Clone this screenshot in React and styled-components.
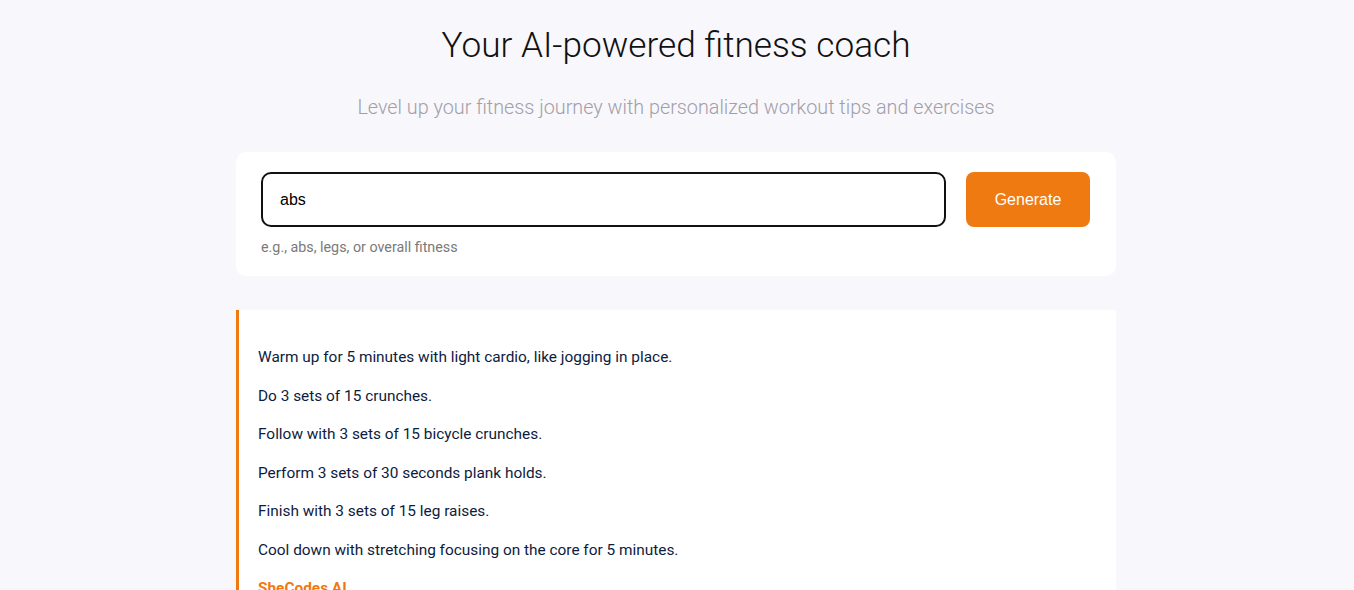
import React, { useState } from "react";
import styled, { createGlobalStyle } from "styled-components";

const GlobalStyle = createGlobalStyle`
  body {
    margin: 0;
    background: #f8f7fc;
    font-family: Roboto, "Liberation Sans", sans-serif;
  }
`;

const Page = styled.main`
  width: 880px;
  margin: 0 auto;
  padding: 22px 2px 0 0;
`;

const Title = styled.h1`
  margin: 0;
  text-align: center;
  font-weight: 300;
  font-size: 35.2px;
  line-height: 46px;
  color: #111;
`;

const Subtitle = styled.p`
  margin: 27px 0 0;
  text-align: center;
  font-weight: 300;
  font-size: 19.8px;
  line-height: 26px;
  color: #a19ea8;
`;

const FormCard = styled.form`
  margin-top: 31px;
  background: #fff;
  border-radius: 10px;
  padding: 20px 26px 20px 25px;
`;

const Row = styled.div`
  display: flex;
  gap: 20px;
`;

const Input = styled.input`
  flex: 1;
  height: 55px;
  box-sizing: border-box;
  border: 2px solid #111;
  border-radius: 10px;
  padding: 0 17px;
  font-family: "Liberation Sans", Arial, sans-serif;
  font-size: 16px;
  color: #000;
  outline: none;
`;

const Button = styled.button`
  width: 124px;
  height: 55px;
  border: none;
  border-radius: 8px;
  background: #f07a12;
  color: #fff;
  font-family: "Liberation Sans", Arial, sans-serif;
  font-size: 16px;
  cursor: pointer;
`;

const Hint = styled.div`
  margin-top: 12px;
  font-size: 14.3px;
  line-height: 17px;
  color: #7a7a7a;
`;

const Answer = styled.section`
  margin-top: 34px;
  background: #fff;
  border-left: 3px solid #f07a12;
  padding: 20px 20px 20px 19px;
`;

const Step = styled.p`
  margin: 16px 0;
  font-size: 15.4px;
  line-height: 22.5px;
  color: #0d1b3e;
`;

const Signature = styled.strong`
  display: block;
  font-size: 15.4px;
  line-height: 22.5px;
  color: #f07a12;
  font-weight: 700;
`;

const steps = [
  "Warm up for 5 minutes with light cardio, like jogging in place.",
  "Do 3 sets of 15 crunches.",
  "Follow with 3 sets of 15 bicycle crunches.",
  "Perform 3 sets of 30 seconds plank holds.",
  "Finish with 3 sets of 15 leg raises.",
  "Cool down with stretching focusing on the core for 5 minutes.",
];

export default function App() {
  const [topic, setTopic] = useState("abs");
  return (
    <>
      <GlobalStyle />
      <Page>
        <Title>Your AI-powered fitness coach</Title>
        <Subtitle>
          Level up your fitness journey with personalized workout tips and exercises
        </Subtitle>
        <FormCard onSubmit={(e) => e.preventDefault()}>
          <Row>
            <Input value={topic} onChange={(e) => setTopic(e.target.value)} />
            <Button type="submit">Generate</Button>
          </Row>
          <Hint>e.g., abs, legs, or overall fitness</Hint>
        </FormCard>
        <Answer>
          {steps.map((s) => (
            <Step key={s}>{s}</Step>
          ))}
          <Signature>SheCodes AI</Signature>
        </Answer>
      </Page>
    </>
  );
}
